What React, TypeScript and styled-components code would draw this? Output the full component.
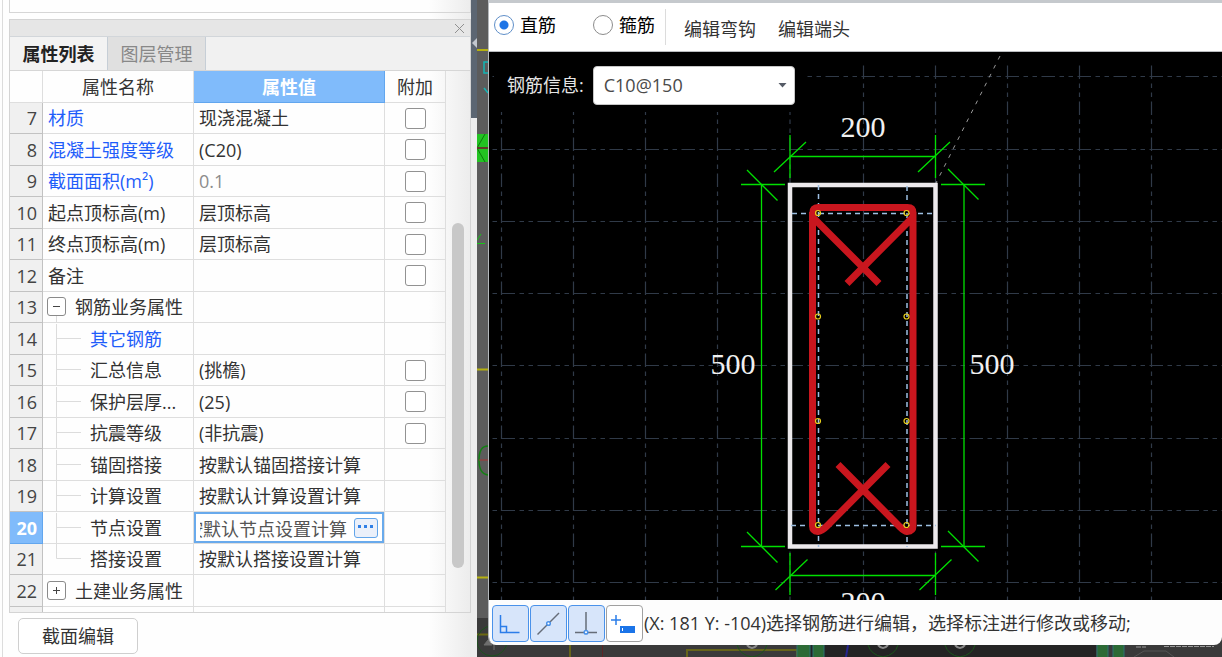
import { useEffect, useRef, useState } from "react";
import styled, { createGlobalStyle, css } from "styled-components";

const GlobalStyle = createGlobalStyle`
  *, *::before, *::after { box-sizing: border-box; }
  body {
    margin: 0;
    overflow: hidden;
    background: #fdfdfd;
    color: #333;
    font: 18px/24px "Open Sans", "Noto Sans CJK SC", sans-serif;
  }
  button, input, select { font: inherit; color: inherit; margin: 0; padding: 0; }
`;

const Page = styled.div`
  display: flex;
  height: 100vh;
`;

/* ---------- left side ---------- */

const Sidebar = styled.aside`
  flex: none;
  width: 471px;
  padding-left: 2px;
  background: linear-gradient(to right, #fefefe 91%, #ececec);
`;

const SidebarInner = styled.div`
  display: flex;
  flex-direction: column;
  height: 100%;
  padding-left: 6px;
  border-left: 1px solid #dcdcdc;
`;

const UpperBox = styled.div`
  flex: none;
  height: 13px;
  margin-bottom: 6px;
  border: 1px solid #d6d6d6;
  border-top: 0;
`;

const Panel = styled.section`
  display: flex;
  flex: 1;
  flex-direction: column;
  min-height: 0;
  border: 1px solid #d4d4d4;
`;

const PanelHeader = styled.header`
  display: flex;
  flex: none;
  align-items: center;
  justify-content: flex-end;
  height: 17px;
  padding-right: 5px;
  background: #e6e6e6;
  border-bottom: 1px solid #d2d6da;
`;

const CloseButton = styled.button`
  display: flex;
  border: 0;
  background: none;
`;

const Tabs = styled.div`
  display: flex;
  flex: none;
  height: 34px;
  background: #f1f1f1;
  border-bottom: 1px solid #d6d6d6;
`;

const Tab = styled.button<{ $active?: boolean }>`
  width: 98px;
  border: 1px solid #c6ced6;
  border-width: 0 1px 0 0;
  background: ${(p) => (p.$active ? "#f3f3f3" : "#e0e0e0")};
  color: ${(p) => (p.$active ? "#222" : "#888")};
  font-weight: ${(p) => (p.$active ? 600 : 400)};
`;

const GridArea = styled.div`
  display: flex;
  flex: 1;
  min-height: 0;
  overflow: hidden;
`;

const Table = styled.table`
  flex: none;
  align-self: flex-start;
  width: 436px;
  table-layout: fixed;
  border-collapse: separate;
  border-spacing: 0;

  tbody tr { height: 31px; }
  tbody tr:nth-child(even) { height: 32px; }
`;

const cell = css`
  height: inherit;
  padding: 0;
  border: 1px solid #dedede;
  border-width: 0 1px 1px 0;
  font-weight: 400;
  white-space: nowrap;
  overflow: hidden;
`;

const HeadCell = styled.th<{ $selected?: boolean }>`
  ${cell}
  height: 32px;
  ${(p) =>
    p.$selected &&
    css`
      background: #80bbfb;
      border-color: #62a6ee;
      color: #fff;
      font-weight: 600;
    `}
`;

const IndexCell = styled.th<{ $selected?: boolean }>`
  ${cell}
  padding-right: 5px;
  text-align: right;
  background: ${(p) => (p.$selected ? "#80bbfb" : "#f0f0f0")};
  border-color: ${(p) => (p.$selected ? "#62a6ee" : "#c2c2c2")};
  color: ${(p) => (p.$selected ? "#fff" : "#444")};
  font-weight: ${(p) => (p.$selected ? 700 : 400)};
`;

const NameCell = styled.td<{ $link?: boolean; $indent: number }>`
  ${cell}
  padding-left: ${(p) => p.$indent}px;
  color: ${(p) => (p.$link ? "#1f5dfa" : "inherit")};
`;

const ValueCell = styled.td<{ $muted?: boolean }>`
  ${cell}
  padding-left: 5px;
  color: ${(p) => (p.$muted ? "#8c8c8c" : "inherit")};
`;

const CheckCell = styled.td`
  ${cell}
  text-align: center;
`;

const NameLine = styled.div<{ $gap: number }>`
  display: flex;
  align-items: center;
  gap: ${(p) => p.$gap}px;
  height: 30px;
`;

const TreeToggle = styled.button`
  display: flex;
  border: 0;
  background: none;
`;

const CheckBox = styled.input`
  display: block;
  width: 21px;
  height: 21px;
  margin: 0 auto;
  appearance: none;
  border: 1px solid #929292;
  border-radius: 3px;
  background: #fff;
`;

const Editor = styled.div`
  display: flex;
  align-items: center;
  gap: 7px;
  height: 31px;
  margin-left: -5px;
  padding-left: 4px;
  border: 2px solid #69aaec;
  background: #fff;
`;

const EditorInput = styled.input`
  width: 147px;
  height: 26px;
  border: 0;
  outline: 0;
  background: none;
  color: #555;
`;

const MoreButton = styled.button`
  display: flex;
  align-items: center;
  justify-content: center;
  width: 24px;
  height: 20px;
  padding-bottom: 2px;
  border: 1px solid #62a5ea;
  border-radius: 3px;
  background: #ebf0fa;
`;

const ScrollTrack = styled.div`
  display: flex;
  flex: 1;
  flex-direction: column;
  align-items: center;
`;

const TrackSpace = styled.div<{ $share: number }>`
  flex: ${(p) => p.$share} 0 0;
`;

const Thumb = styled.div`
  flex: 345 0 0;
  width: 12px;
  border-radius: 6px;
  background: #c8c8c8;
`;

const Footer = styled.footer`
  flex: none;
  padding: 5px 0 3px 9px;
`;

const SectionButton = styled.button`
  display: block;
  width: 120px;
  height: 36px;
  border: 1px solid #cfcfcf;
  border-radius: 5px;
  background: #fff;
`;

const Splitter = styled.div`
  display: flex;
  flex: none;
  flex-direction: column;
  width: 6px;
  background: #ededed;
`;

const SplitterHandle = styled.button`
  display: flex;
  justify-content: center;
  width: 6px;
  height: 118px;
  padding-top: 38px;
  border: 0;
  background: #5c6672;
`;

/* ---------- right side ---------- */

const Workspace = styled.main`
  position: relative;
  display: flex;
  flex: 1;
  min-width: 0;
  padding: 0 0 12px 11px;
  background: #3a3a3a;
`;

const Scene = styled.svg`
  position: absolute;
  inset: 0;
  width: 100%;
  height: 100%;
`;

const Dialog = styled.section`
  position: relative;
  display: flex;
  flex: 1;
  flex-direction: column;
  min-width: 0;
  overflow: hidden;
  border-top: 3px solid #c5c9cd;
  border-left: 1px solid #b4b8bc;
  border-radius: 0 0 8px 8px;
`;

const Toolbar = styled.div`
  display: flex;
  flex: none;
  align-items: center;
  height: 49px;
  padding-left: 5px;
  background: #fff;
  border-bottom: 1px solid #b9bcbf;
`;

const RadioLabel = styled.label`
  display: flex;
  align-items: center;
  gap: 6px;
  margin-right: 37px;
  padding-bottom: 4px;
  color: #000;
`;

const Radio = styled.input`
  width: 20px;
  height: 20px;
  appearance: none;
  border: 1px solid #8c8c8c;
  border-radius: 50%;
  background: #fff;

  &:checked {
    border-color: #5f8fc8;
    background: radial-gradient(circle, #1f75e6 0 4px, #fff 5px);
  }
`;

const Divider = styled.div`
  width: 1px;
  height: 36px;
  margin: 0 18px 0 -27px;
  background: #dcdcdc;
`;

const TextButton = styled.button`
  margin-right: 22px;
  padding-top: 3px;
  border: 0;
  background: none;
`;

const Canvas = styled.div`
  position: relative;
  flex: 1;
  min-height: 0;
  overflow: hidden;
  background: #000;
`;

const InfoBar = styled.div`
  position: absolute;
  top: 6px;
  left: 5px;
  display: flex;
  align-items: center;
  gap: 9px;
  height: 54px;
  padding: 0 11px 0 13px;
  background: #000;
  color: #e4e4e4;
`;

const SelectBox = styled.div`
  display: grid;
  align-items: center;
  width: 202px;

  > * { grid-area: 1 / 1; }
  svg { justify-self: end; margin-right: 8px; pointer-events: none; }
`;

const Select = styled.select`
  width: 100%;
  height: 39px;
  padding-left: 10px;
  appearance: none;
  border: 1px solid #c6c6c6;
  border-radius: 4px;
  background: #fff;
  color: #4a4a4a;
`;

const StatusBar = styled.div`
  display: flex;
  flex: none;
  align-items: center;
  gap: 1px;
  height: 45px;
  padding: 1px 0 0 3px;
  background: #fdfdfd;
`;

const ToolButton = styled.button<{ $on?: boolean }>`
  display: flex;
  align-items: center;
  justify-content: center;
  width: 37px;
  height: 37px;
  border: 1px solid ${(p) => (p.$on ? "#4a92ea" : "#a0a0a0")};
  border-radius: 4px;
  background: ${(p) => (p.$on ? "#d7e5fa" : "#fff")};
`;

type Row = {
  n?: number;
  name?: string;
  value?: string;
  link?: boolean;
  muted?: boolean;
  check?: boolean;
  kind?: "plus" | "minus" | "child" | "last";
  edit?: boolean;
};

const rows: Row[] = [
  { n: 7, name: "材质", value: "现浇混凝土", link: true, check: true },
  { n: 8, name: "混凝土强度等级", value: "(C20)", link: true, check: true },
  { n: 9, name: "截面面积(m²)", value: "0.1", link: true, muted: true, check: true },
  { n: 10, name: "起点顶标高(m)", value: "层顶标高", check: true },
  { n: 11, name: "终点顶标高(m)", value: "层顶标高", check: true },
  { n: 12, name: "备注", check: true },
  { n: 13, name: "钢筋业务属性", kind: "minus" },
  { n: 14, name: "其它钢筋", kind: "child", link: true },
  { n: 15, name: "汇总信息", value: "(挑檐)", kind: "child", check: true },
  { n: 16, name: "保护层厚...", value: "(25)", kind: "child", check: true },
  { n: 17, name: "抗震等级", value: "(非抗震)", kind: "child", check: true },
  { n: 18, name: "锚固搭接", value: "按默认锚固搭接计算", kind: "child" },
  { n: 19, name: "计算设置", value: "按默认计算设置计算", kind: "child" },
  { n: 20, name: "节点设置", value: "按默认节点设置计算", kind: "child", edit: true },
  { n: 21, name: "搭接设置", value: "按默认搭接设置计算", kind: "last" },
  { n: 22, name: "土建业务属性", kind: "plus" },
  {},
];

function RowName({ row }: { row: Row }) {
  if (row.kind === "plus" || row.kind === "minus") {
    const open = row.kind === "minus";
    return (
      <NameLine $gap={9}>
        <TreeToggle aria-label={open ? "收起" : "展开"} aria-expanded={open}>
          <svg width="19" height="30" fill="none" stroke="#8a8a8a">
            <rect x="0.5" y="5.5" width="18" height="18" rx="2.5" fill="#fff" />
            <path d={open ? "M6 14.5h7" : "M6 14.5h7M9.5 11v7"} stroke="#444" />
            {open && <path d="M9.5 24v6" stroke="#dcdcdc" />}
          </svg>
        </TreeToggle>
        {row.name}
      </NameLine>
    );
  }
  if (row.kind) {
    return (
      <NameLine $gap={9}>
        <svg width="25" height="30" fill="none" stroke="#dcdcdc">
          <path d={row.kind === "last" ? "M0.5 0V14.5H25" : "M0.5 0V30M0 14.5H25"} />
        </svg>
        {row.name}
      </NameLine>
    );
  }
  return <>{row.name}</>;
}

function ValueEditor({ text }: { text: string }) {
  const ref = useRef<HTMLInputElement>(null);
  useEffect(() => {
    if (ref.current) ref.current.scrollLeft = ref.current.scrollWidth;
  }, []);
  return (
    <Editor>
      <EditorInput ref={ref} aria-label="节点设置" defaultValue={text} />
      <MoreButton aria-label="更多">
        <svg width="16" height="3" fill="#2f7fe6">
          <rect x="0" y="0" width="3" height="3" />
          <rect x="6" y="0" width="3" height="3" />
          <rect x="12" y="0" width="3" height="3" />
        </svg>
      </MoreButton>
    </Editor>
  );
}

function PropertyTable() {
  return (
    <Table>
      <colgroup>
        <col width="33" />
        <col width="151" />
        <col width="191" />
        <col width="61" />
      </colgroup>
      <thead>
        <tr>
          <HeadCell />
          <HeadCell scope="col">属性名称</HeadCell>
          <HeadCell scope="col" $selected>属性值</HeadCell>
          <HeadCell scope="col">附加</HeadCell>
        </tr>
      </thead>
      <tbody>
        {rows.map((row, i) => (
          <tr key={i}>
            <IndexCell scope="row" $selected={row.edit}>{row.n}</IndexCell>
            <NameCell
              $link={row.link}
              $indent={row.kind === "child" || row.kind === "last" ? 13 : row.kind ? 4 : 5}
            >
              <RowName row={row} />
            </NameCell>
            <ValueCell $muted={row.muted}>
              {row.edit ? <ValueEditor text={row.value!} /> : row.value}
            </ValueCell>
            <CheckCell>
              {row.check && <CheckBox type="checkbox" aria-label={`附加 ${row.name}`} />}
            </CheckCell>
          </tr>
        ))}
      </tbody>
    </Table>
  );
}

function BackgroundScene() {
  return (
    <Scene aria-hidden="true">
      <g transform="translate(-477 0)" fill="none">
        <rect x="477" y="0" width="12" height="618" fill="#5c5c5c" />
        <rect x="806" y="640" width="290" height="20" fill="#242424" />
        <path d="M477 50h11M477 369.500h11M477 577.500h11" stroke="#b5b011" strokeWidth="2" />
        <path d="M488 62h-4v11h4M484 88l4 5" stroke="#12b5b5" strokeWidth="1.500" />
        <rect x="477" y="134" width="11" height="28" fill="#22c322" />
        <path d="M477 148l8-14M477 148l8 14" stroke="#0b7a0b" />
        <path d="M477 148h11" stroke="#5f3c28" strokeWidth="2" />
        <path d="M477 243.500h8M477 240l4-6" stroke="#19c419" />
        <path d="M488 446q-9 0-9 14t9 15" stroke="#148014" strokeWidth="1.500" />
        <path d="M479 460h9" stroke="#a33" />
        <path d="M477 634.500h11" stroke="#6c6912" strokeWidth="2" />
        <circle cx="492" cy="641" r="15" stroke="#1d521d" />
        <path d="M484 645l4-5 4 5zM494 645v5" fill="#6e6e6e" stroke="#6e6e6e" />
        <path d="M570 645v12M687 657v-7h110v7" stroke="#66641a" strokeWidth="2" />
        <path d="M602.500 645v12" stroke="#5b2525" />
        <path d="M737 645q3 10 15 12q12-2 15-12M868 645q3 10 15 12q12-2 15-12M945 645q3 10 15 12q12-2 15-12" stroke="#1b551b" />
        <path d="M747 645q5 6 10 0M878 645q5 6 10 0M955 645q5 6 10 0" stroke="#8a8a8a" strokeWidth="2" />
        <g fill="#2c6a35" stroke="#2a7272">
          <rect x="797" y="644" width="13" height="16" />
          <rect x="813" y="644" width="11" height="16" />
          <rect x="1097" y="644" width="11" height="16" />
          <rect x="1113" y="644" width="11" height="16" />
        </g>
        <path d="M848 645l-2 12" stroke="#26268e" strokeWidth="2" />
        <path d="M1136 647h10M1164 646.500h50" stroke="#999" strokeDasharray="5 1" />
        <path d="M1134 657l10-6h22l8 6" stroke="#555" />
      </g>
    </Scene>
  );
}

const gridX = [501.5, 573.5, 645.5, 717.5, 790, 863.5, 935.5, 1007.5, 1079.5, 1151.5, 1223.5, 1295.5];
const gridY = [76.5, 149.5, 221.5, 293.5, 365.5, 438.5, 510.5, 582.5];
const barY = [213, 316.5, 421, 525];

function SectionDrawing() {
  return (
    <svg width="100%" height="100%" role="img" aria-label="截面钢筋图">
      <g transform="translate(-489 -52)" fill="none">
        <g stroke="#303a48" strokeWidth="1.200" strokeDasharray="13.500 4.500 4.500 4.500 4.500 4.500">
          {gridY.map((y) => (
            <path key={y} d={`M465.500 ${y}H2400`} />
          ))}
          {gridX.map((x) => (
            <path key={x} d={`M${x} 65.500V1500`} />
          ))}
        </g>
        <path d="M1000 56L936 183" stroke="#9a9a9a" strokeDasharray="4 6" />

        <g stroke="#00e000" strokeWidth="1.300">
          <path d="M790 156.500H936M761.500 185V546.500M964 185V546.500M790 575.500H936" />
          <path d="M790 135v43M935.500 135v43M790 553v42M935.500 553v42" />
          <path d="M741 184.500h44M941 184.500h44M741 546.500h44M941 546.500h44" />
          <path d="M774 172L806 142M918 172L950 142M775.500 590L807.500 559.500M919.500 590L951.500 559.500" />
          <path d="M747 170L777.500 200.500M948 169L978.500 199.500M747 532L777.500 562.500M948 531L978.500 561.500" />
        </g>

        <rect x="790" y="185" width="145.500" height="361.500" stroke="#ece9ec" strokeWidth="4.500" />
        <g stroke="#9dbfe2" strokeDasharray="5 4" strokeWidth="1.500">
          <path d="M818.500 185V547M907 186V547" />
          <path d="M792 213.500H936M791 525.500H936" />
        </g>
        <path
          d="M879 283.500L813 217.500V213Q812.500 207.500 818 207.500H907.500Q913 207.500 913 213V217L847 283.500M812.500 212V526Q812.500 531 818 531.500Q822 531 827 526L888 464.500M913 212V526Q913 531 907 531.500Q904 531 900 527L838 464.500"
          stroke="#c9161e"
          strokeWidth="7"
        />
        <g stroke="#e8cf1c" strokeWidth="1.200">
          {barY.map((y) => (
            <g key={y}>
              <circle cx="818" cy={y} r="2.500" />
              <circle cx="906.500" cy={y} r="2.500" />
            </g>
          ))}
        </g>

        <g fill="#f0f0f0" fontFamily='"Liberation Serif", serif' fontSize="30" textAnchor="middle">
          <text x="863" y="137">200</text>
          <text x="733" y="374">500</text>
          <text x="992" y="374">500</text>
          <text x="863" y="612">200</text>
        </g>
      </g>
    </svg>
  );
}

function BarDialog() {
  const [shape, setShape] = useState("straight");
  return (
    <Dialog aria-label="截面编辑">
      <Toolbar>
        <RadioLabel>
          <Radio type="radio" name="bar" checked={shape === "straight"} onChange={() => setShape("straight")} />
          直筋
        </RadioLabel>
        <RadioLabel>
          <Radio type="radio" name="bar" checked={shape === "stirrup"} onChange={() => setShape("stirrup")} />
          箍筋
        </RadioLabel>
        <Divider />
        <TextButton>编辑弯钩</TextButton>
        <TextButton>编辑端头</TextButton>
      </Toolbar>
      <Canvas>
        <SectionDrawing />
        <InfoBar>
          <label htmlFor="bar-info">钢筋信息:</label>
          <SelectBox>
            <Select id="bar-info" defaultValue="C10@150">
              <option>C10@150</option>
            </Select>
            <svg width="9" height="6" fill="#555b66">
              <path d="M0.500 1h8l-4 4.500z" />
            </svg>
          </SelectBox>
        </InfoBar>
      </Canvas>
      <StatusBar>
        <ToolButton $on aria-label="正交">
          <svg width="25" height="23" fill="none" stroke="#2b7de9" strokeWidth="1.500">
            <path d="M2.500 3v17.500h19M2.500 14.500h6v6" />
          </svg>
        </ToolButton>
        <ToolButton $on aria-label="中点">
          <svg width="27" height="27" fill="none" stroke="#666d78" strokeWidth="1.500">
            <path d="M2.500 24.500L24 3" />
            <circle cx="13.500" cy="13.500" r="1.800" fill="#fff" stroke="#4a92ea" />
          </svg>
        </ToolButton>
        <ToolButton $on aria-label="垂足">
          <svg width="25" height="27" fill="none" stroke="#666d78" strokeWidth="1.500">
            <path d="M12 2v19M1 22.500h22" />
            <circle cx="12" cy="22.200" r="1.800" fill="#fff" stroke="#4a92ea" />
          </svg>
        </ToolButton>
        <ToolButton aria-label="动态输入">
          <svg width="29" height="23" fill="none" stroke="#2b7de9" strokeWidth="1.500">
            <path d="M1 8h10M6 3v10" />
            <rect x="10" y="14" width="15" height="7" fill="#1b74e8" stroke="none" />
            <path d="M12.500 16v3" stroke="#fff" strokeWidth="1" />
          </svg>
        </ToolButton>
        <span>(X: 181 Y: -104)选择钢筋进行编辑，选择标注进行修改或移动;</span>
      </StatusBar>
    </Dialog>
  );
}

export default function App() {
  return (
    <Page>
      <GlobalStyle />
      <Sidebar>
        <SidebarInner>
          <UpperBox />
          <Panel>
            <PanelHeader>
              <CloseButton aria-label="关闭">
                <svg width="11" height="11" stroke="#909090" fill="none">
                  <path d="M1 1l9 9M10 1l-9 9" />
                </svg>
              </CloseButton>
            </PanelHeader>
            <Tabs role="tablist">
              <Tab role="tab" aria-selected="true" $active>属性列表</Tab>
              <Tab role="tab" aria-selected="false">图层管理</Tab>
            </Tabs>
            <GridArea>
              <PropertyTable />
              <ScrollTrack>
                <TrackSpace $share={152} />
                <Thumb />
                <TrackSpace $share={44} />
              </ScrollTrack>
            </GridArea>
          </Panel>
          <Footer>
            <SectionButton>截面编辑</SectionButton>
          </Footer>
        </SidebarInner>
      </Sidebar>
      <Splitter>
        <SplitterHandle aria-label="折叠面板">
          <svg width="5" height="10" fill="#c3c8ce">
            <path d="M5 0v10L0 5z" />
          </svg>
        </SplitterHandle>
      </Splitter>
      <Workspace>
        <BackgroundScene />
        <BarDialog />
      </Workspace>
    </Page>
  );
}
